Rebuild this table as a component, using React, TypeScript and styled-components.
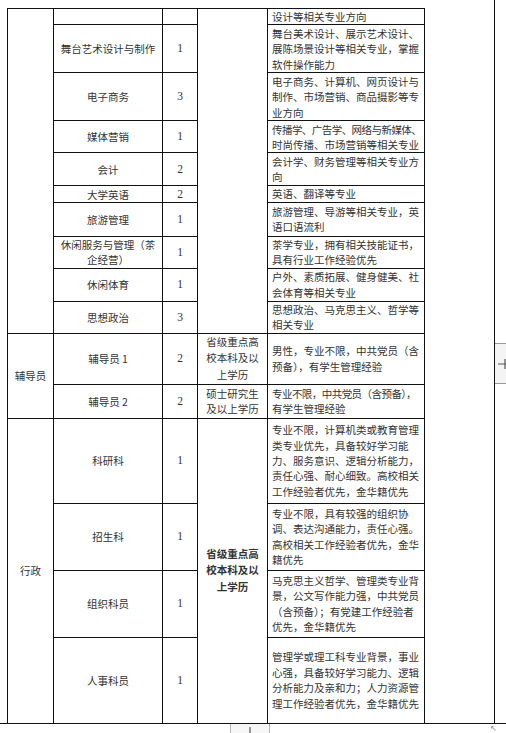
import React from "react";
import styled, { createGlobalStyle } from "styled-components";

const Global = createGlobalStyle`
  html, body { margin: 0; padding: 0; background: #fff; }
  body { font-family: "Noto Sans CJK SC", "Noto Sans", sans-serif; }
`;

const Frame = styled.div`
  width: 506px;
  height: 733px;
  overflow: hidden;
  display: flex;
  flex-direction: column;
  background: #fff;
`;

const Main = styled.div`
  height: 723px;
  display: flex;
  flex-direction: row;
`;

const Sheet = styled.div`
  width: 495px;
  border-right: 1px solid #111;
  padding: 8px 0 0 7px;
  box-sizing: border-box;
`;

const Gutter = styled.div`
  flex: 1;
  position: relative;
`;

const AddHandle = styled.div`
  position: absolute;
  left: 0;
  top: 343px;
  width: 12px;
  height: 41px;
  box-sizing: border-box;
  border-top: 1px solid #9a9a9a;
  border-bottom: 1px solid #9a9a9a;
  background: #f4f4f4;
  display: flex;
  align-items: center;
  justify-content: flex-end;
`;

const BottomBar = styled.div`
  flex: 1;
  border-top: 1px solid #111;
  position: relative;
`;

const TabButton = styled.div`
  position: absolute;
  left: 230px;
  top: 0;
  width: 40px;
  height: 12px;
  box-sizing: border-box;
  border-left: 1px solid #b5b5b5;
  border-right: 1px solid #b5b5b5;
  background: #f7f7f7;
  display: flex;
  justify-content: center;
`;

const CornerGlyph = styled.div`
  position: absolute;
  left: 490px;
  top: 0px;
  font-family: "DejaVu Sans", sans-serif;
  font-size: 8px;
  line-height: 9px;
  color: #8a8a8a;
`;

const Table = styled.table`
  border-collapse: collapse;
  table-layout: fixed;
  width: 417px;
  font-family: "Noto Sans CJK SC", "Noto Sans", sans-serif;
  font-size: 10.5px;
  color: #333;
`;

const Row = styled.tr<{ $h: number }>`
  height: ${(p) => p.$h}px;
`;

const Cell = styled.td<{ $align?: "left" | "center"; $bold?: boolean }>`
  border: 1px solid #111;
  padding: 0 0 0 ${(p) => (p.$align === "left" ? "4px" : "0")};
  text-align: ${(p) => p.$align || "center"};
  vertical-align: middle;
  line-height: 15px;
  font-weight: ${(p) => (p.$bold ? 700 : 400)};
  white-space: nowrap;
  overflow: hidden;
`;

const CountCell = styled(Cell)`
  font-family: "Liberation Serif", "Noto Sans CJK SC", serif;
  font-size: 11.5px;
`;

const Line = styled.div<{ $tight?: boolean }>`
  display: block;
  line-height: 15.4px;
  letter-spacing: ${(p) => (p.$tight ? "-0.55px" : "0")};
`;

const NameLine = styled.div`
  line-height: 15px;
`;

const EduLine = styled.div`
  line-height: 16.5px;
`;

type Item = { name: string[]; count: string; desc: string[]; h: number };

const Lines = ({ lines }: { lines: string[] }) => (
  <>
    {lines.map((l, i) => (
      <Line key={i} $tight={l.length >= 15}>
        {l}
      </Line>
    ))}
  </>
);

const Name = ({ lines }: { lines: string[] }) => (
  <>
    {lines.map((l, i) => (
      <NameLine key={i}>{l}</NameLine>
    ))}
  </>
);

const Edu = ({ lines }: { lines: string[] }) => (
  <>
    {lines.map((l, i) => (
      <EduLine key={i}>{l}</EduLine>
    ))}
  </>
);

const teaching: Item[] = [
  { name: ["舞台艺术设计与制作"], count: "1", h: 48, desc: ["舞台美术设计、展示艺术设计、", "展陈场景设计等相关专业，掌握", "软件操作能力"] },
  { name: ["电子商务"], count: "3", h: 48, desc: ["电子商务、计算机、网页设计与", "制作、市场营销、商品摄影等专", "业方向"] },
  { name: ["媒体营销"], count: "1", h: 32, desc: ["传播学、广告学、网络与新媒体、", "时尚传播、市场营销等相关专业"] },
  { name: ["会计"], count: "2", h: 33, desc: ["会计学、财务管理等相关专业方", "向"] },
  { name: ["大学英语"], count: "2", h: 16, desc: ["英语、翻译等专业"] },
  { name: ["旅游管理"], count: "1", h: 34, desc: ["旅游管理、导游等相关专业，英", "语口语流利"] },
  { name: ["休闲服务与管理（茶", "企经营）"], count: "1", h: 31, desc: ["茶学专业，拥有相关技能证书，", "具有行业工作经验优先"] },
  { name: ["休闲体育"], count: "1", h: 33, desc: ["户外、素质拓展、健身健美、社", "会体育等相关专业"] },
  { name: ["思想政治"], count: "3", h: 32, desc: ["思想政治、马克思主义、哲学等", "相关专业"] },
];

const admin: Item[] = [
  { name: ["科研科"], count: "1", h: 85, desc: ["专业不限，计算机类或教育管理", "类专业优先，具备较好学习能", "力、服务意识、逻辑分析能力，", "责任心强、耐心细致。高校相关", "工作经验者优先，金华籍优先"] },
  { name: ["招生科"], count: "1", h: 67, desc: ["专业不限，具有较强的组织协", "调、表达沟通能力，责任心强。", "高校相关工作经验者优先，金华", "籍优先"] },
  { name: ["组织科员"], count: "1", h: 67, desc: ["马克思主义哲学、管理类专业背", "景，公文写作能力强，中共党员", "（含预备）；有党建工作经验者", "优先，金华籍优先"] },
  { name: ["人事科员"], count: "1", h: 86, desc: ["管理学或理工科专业背景，事业", "心强，具备较好学习能力、逻辑", "分析能力及亲和力；人力资源管", "理工作经验者优先，金华籍优先"] },
];

export default function App() {
  return (
    <Frame>
      <Global />
      <Main>
        <Sheet>
          <Table>
            <colgroup>
              <col style={{ width: 46 }} />
              <col style={{ width: 109 }} />
              <col style={{ width: 35 }} />
              <col style={{ width: 70 }} />
              <col style={{ width: 157 }} />
            </colgroup>
            <tbody>
              <Row $h={16}>
                <Cell rowSpan={10} />
                <Cell />
                <CountCell />
                <Cell rowSpan={10} />
                <Cell $align="left">
                  <Lines lines={["设计等相关专业方向"]} />
                </Cell>
              </Row>
              {teaching.map((t, i) => (
                <Row key={i} $h={t.h}>
                  <Cell>
                    <Name lines={t.name} />
                  </Cell>
                  <CountCell>{t.count}</CountCell>
                  <Cell $align="left">
                    <Lines lines={t.desc} />
                  </Cell>
                </Row>
              ))}
              <Row $h={51}>
                <Cell rowSpan={2}>辅导员</Cell>
                <Cell>辅导员 1</Cell>
                <CountCell>2</CountCell>
                <Cell>
                  <Edu lines={["省级重点高", "校本科及以", "上学历"]} />
                </Cell>
                <Cell $align="left">
                  <Lines lines={["男性，专业不限，中共党员（含", "预备），有学生管理经验"]} />
                </Cell>
              </Row>
              <Row $h={34}>
                <Cell>辅导员 2</Cell>
                <CountCell>2</CountCell>
                <Cell>
                  <Name lines={["硕士研究生", "及以上学历"]} />
                </Cell>
                <Cell $align="left">
                  <Lines lines={["专业不限，中共党员（含预备），", "有学生管理经验"]} />
                </Cell>
              </Row>
              {admin.map((t, i) => (
                <Row key={i} $h={t.h}>
                  {i === 0 && <Cell rowSpan={4}>行政</Cell>}
                  <Cell>
                    <Name lines={t.name} />
                  </Cell>
                  <CountCell>{t.count}</CountCell>
                  {i === 0 && (
                    <Cell rowSpan={4} $bold>
                      <Edu lines={["省级重点高", "校本科及以", "上学历"]} />
                    </Cell>
                  )}
                  <Cell $align="left">
                    <Lines lines={t.desc} />
                  </Cell>
                </Row>
              ))}
            </tbody>
          </Table>
        </Sheet>
        <Gutter>
          <AddHandle>
            <svg width="10" height="12" viewBox="0 0 10 12">
              <path d="M1 6 H10 M8 1 V11" stroke="#555" strokeWidth="1.2" fill="none" />
            </svg>
          </AddHandle>
        </Gutter>
      </Main>
      <BottomBar>
        <TabButton>
          <svg width="10" height="10" viewBox="0 0 10 10">
            <path d="M5 3 V10" stroke="#555" strokeWidth="1.2" fill="none" />
          </svg>
        </TabButton>
        <CornerGlyph>↖</CornerGlyph>
      </BottomBar>
    </Frame>
  );
}
